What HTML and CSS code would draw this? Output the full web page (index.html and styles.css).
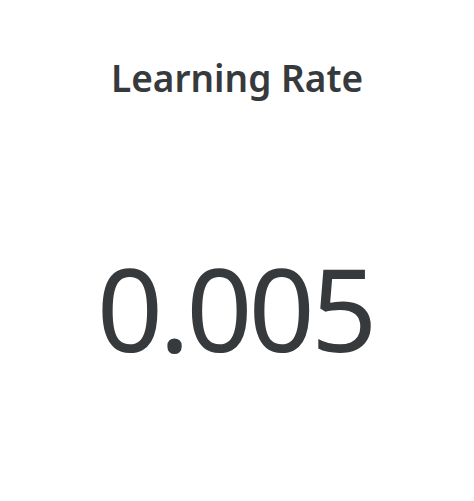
FILE: index.html
```html
<!DOCTYPE html>
<html>
<head>
<meta charset="utf-8">
<link rel="stylesheet" href="styles.css">
</head>
<body>
<div class="card">
  <div class="title">Learning Rate</div>
  <div class="value">0.005</div>
</div>
</body>
</html>
```

FILE: styles.css
```css
html, body {
  margin: 0;
  padding: 0;
  background: #ffffff;
}
.card {
  width: 474px;
  height: 501px;
  display: flex;
  flex-direction: column;
  align-items: center;
  font-family: "Noto Sans", "Open Sans", sans-serif;
  color: #373a3d;
}
.title {
  margin-top: 52px;
  font-size: 37px;
  font-weight: 600;
  line-height: 52px;
}
.value {
  margin-top: 128px;
  font-size: 116px;
  font-weight: 400;
  line-height: 150px;
  letter-spacing: -4px;
  padding-right: 4px;
}
```
